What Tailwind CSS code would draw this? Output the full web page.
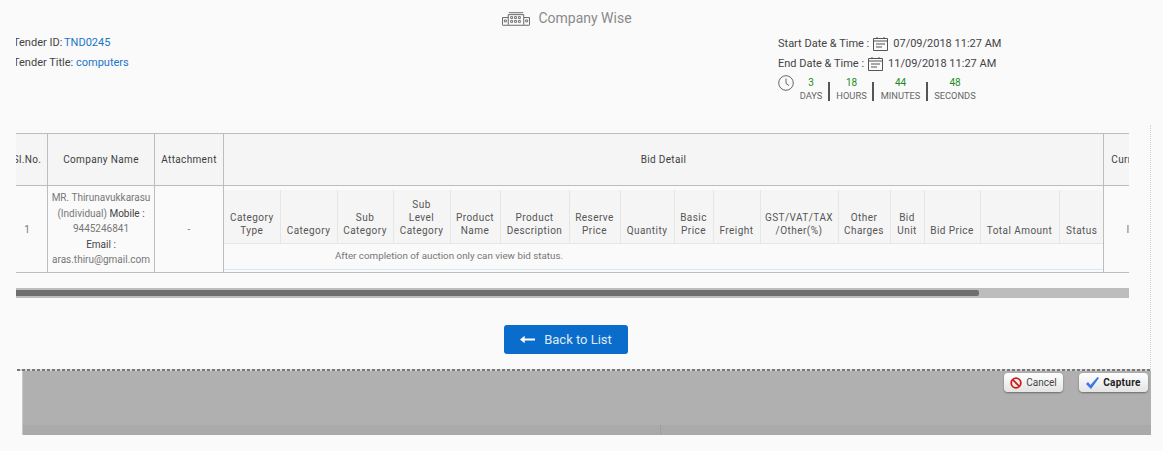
<!DOCTYPE html>
<html lang="en">
<head>
    <meta charset="UTF-8">
    <title>Company Wise</title>
    <script src="https://cdn.jsdelivr.net/npm/@tailwindcss/browser@4"></script>
</head>
<body class="bg-[#fafafa] font-['Roboto',sans-serif] h-[451px] w-[1163px] overflow-hidden relative">

<!-- page content, clipped on both sides like the original frame -->
<div class="ml-[16px] w-[1113px] overflow-hidden">
    <div class="flex justify-center items-center gap-[8px] pr-[11px] pt-[5px] h-[31px] text-[14px] text-[#8a8a8a]">
        <svg width="28" height="15" viewBox="0 0 29 15" fill="none" stroke="#666" stroke-width="1">
            <path d="M7 1.500h15M6.500 14V3.500h16V14M.5 14V6.500h6M28.500 14V6.500h-6M.5 14.500h28"/>
            <path d="M9 5.500h2v2H9zM13 5.500h2v2h-2zM17 5.500h2v2h-2zM9 9.500h2v2H9zM13 9.500h2v2h-2zM17 9.500h2v2h-2zM2.500 9h2v2h-2zM24.500 9h2v2h-2z" stroke-width="0.9"/>
        </svg>
        <span>Company Wise</span>
    </div>

    <div class="flex justify-between text-[11px] text-[#444] h-[94px]">
        <div class="-ml-[3px] pt-[2px] leading-[20px]">
            <div>Tender ID: <span class="text-[#1976c9] -ml-[1px]">TND0245</span></div>
            <div>Tender Title: <span class="text-[#1976c9]">computers</span></div>
        </div>
        <div class="w-[351px] pt-[3px] leading-[20px]">
            <div class="flex items-center gap-[4px]">
                <span>Start Date &amp; Time :</span>
                <svg width="15" height="14" viewBox="0 0 15 14" fill="none" stroke="#555"><path d="M.5 1.500h14v12H.5zM.5 4h14M4 0v2M11 0v2M3 7h9M3 10h6"/></svg>
                <span class="ml-[1px]">07/09/2018 11:27 AM</span>
            </div>
            <div class="flex items-center gap-[4px]">
                <span>End Date &amp; Time :</span>
                <svg width="15" height="14" viewBox="0 0 15 14" fill="none" stroke="#555"><path d="M.5 1.500h14v12H.5zM.5 4h14M4 0v2M11 0v2M3 7h9M3 10h6"/></svg>
                <span class="ml-[1px]">11/09/2018 11:27 AM</span>
            </div>
            <div class="flex items-start mt-[1px]">
                <svg class="mr-[5px]" width="16" height="16" viewBox="0 0 16 16" fill="none" stroke="#666"><circle cx="8" cy="8" r="7.300"/><path d="M8 3.500V8.500L11 10.500"/></svg>
                <div class="w-[24px] text-center leading-[13px] mt-[1px]"><div class="text-[10px] text-[#1c8c1c]">3</div><div class="text-[9.3px] text-[#666] whitespace-nowrap">DAYS</div></div>
                <div class="w-[2px] h-[19px] bg-[#555] ml-[5px] mr-[6px] mt-[7px]"></div>
                <div class="w-[31px] text-center leading-[13px] mt-[1px]"><div class="text-[10px] text-[#1c8c1c]">18</div><div class="text-[9.3px] text-[#666]">HOURS</div></div>
                <div class="w-[2px] h-[19px] bg-[#555] ml-[5px] mr-[6px] mt-[7px]"></div>
                <div class="w-[41px] text-center leading-[13px] mt-[1px]"><div class="text-[10px] text-[#1c8c1c]">44</div><div class="text-[9.3px] text-[#666]">MINUTES</div></div>
                <div class="w-[2px] h-[19px] bg-[#555] ml-[5px] mr-[6px] mt-[7px]"></div>
                <div class="w-[42px] text-center leading-[13px] mt-[1px]"><div class="text-[10px] text-[#1c8c1c]">48</div><div class="text-[9.3px] text-[#666]">SECONDS</div></div>
            </div>
        </div>
    </div>

    <div class="mt-[8px] overflow-hidden">
        <table class="-ml-[10px] w-[1155px] table-fixed border-collapse text-[10px] text-[#777]">
            <colgroup><col class="w-[41px]"><col class="w-[107px]"><col class="w-[69px]"><col class="w-[880px]"><col class="w-[58px]"></colgroup>
            <thead>
                <tr class="h-[52px] bg-[#f5f5f5] text-[#3d3d3d] tracking-[0.35px]">
                    <th class="border border-[#bdbdbd] font-normal">Sl.No.</th>
                    <th class="border border-[#bdbdbd] font-normal">Company Name</th>
                    <th class="border border-[#bdbdbd] font-normal">Attachment</th>
                    <th class="border border-[#bdbdbd] font-normal">Bid Detail</th>
                    <th class="border border-[#bdbdbd] font-normal whitespace-nowrap">Currency</th>
                </tr>
            </thead>
            <tbody>
                <tr class="h-[87px]">
                    <td class="border border-[#bdbdbd] text-center">1</td>
                    <td class="border border-[#bdbdbd] text-center leading-[15.4px] px-[3px] whitespace-nowrap">MR. Thirunavukkarasu<br>(Individual) <span class="text-[#444]">Mobile :</span><br>9445246841<br><span class="text-[#444]">Email :</span><br>aras.thiru@gmail.com</td>
                    <td class="border border-[#bdbdbd] text-center">-</td>
                    <td class="border border-[#bdbdbd] p-0 align-top pt-[4px]">
                        <table class="w-full table-fixed border-collapse">
                            <colgroup><col class="w-[56px]"><col class="w-[57px]"><col class="w-[56px]"><col class="w-[57px]"><col class="w-[50px]"><col class="w-[69px]"><col class="w-[51px]"><col class="w-[54px]"><col class="w-[39px]"><col class="w-[47px]"><col class="w-[78px]"><col class="w-[52px]"><col class="w-[34px]"><col class="w-[56px]"><col class="w-[79px]"><col class="w-[45px]"></colgroup>
                            <tr class="h-[53px] bg-[#f5f5f5] text-[#555] tracking-[0.45px] leading-[13px] text-center align-bottom [&>th]:font-normal [&>th]:pb-[6px] [&>th]:border-r [&>th]:border-[#e6e6e6] [&>th:last-child]:border-r-0">
                                <th>Category Type</th>
                                <th>Category</th>
                                <th>Sub Category</th>
                                <th>Sub<br>Level Category</th>
                                <th>Product Name</th>
                                <th>Product Description</th>
                                <th>Reserve Price</th>
                                <th>Quantity</th>
                                <th>Basic Price</th>
                                <th>Freight</th>
                                <th>GST/VAT/TAX<br>/Other(%)</th>
                                <th>Other Charges</th>
                                <th>Bid Unit</th>
                                <th>Bid Price</th>
                                <th>Total Amount</th>
                                <th>Status</th>
                            </tr>
                            <tr class="h-[26px] border-t border-[#e6e6e6] border-b border-b-[#d8e9f3]">
                                <td colspan="8" class="text-center text-[9.8px] pt-[1px]">After completion of auction only can view bid status.</td>
                                <td colspan="8"></td>
                            </tr>
                        </table>
                    </td>
                    <td class="border border-[#bdbdbd] text-center pl-[4px]">INR</td>
                </tr>
            </tbody>
        </table>
    </div>

    <!-- horizontal scrollbar -->
    <div class="mt-[15px] h-[10px] bg-[#bdbdbd] pt-[2px]">
        <div class="w-[963px] h-[6px] bg-[#6e6e6e] rounded-r-[2px]"></div>
    </div>

    <div class="mt-[27px] flex justify-center pr-[13px]">
        <button class="w-[124px] h-[29px] rounded-[3px] bg-[#0b6dcb] text-[#dfeaf6] text-[13px] flex items-center justify-center gap-[9px]">
            <svg width="15" height="9" viewBox="0 0 16 9" fill="#fff"><path d="M0 4.500L5 .5V3.500H16V5.500H5V8.500Z"/></svg>
            <span>Back to List</span>
        </button>
    </div>
</div>

<!-- capture selection overlay -->
<div class="absolute left-[1150px] top-[125px] h-[244px] border-l border-dotted border-[#d0d0d0]"></div>
<div class="mt-[15px] ml-[17px] w-[1134px] h-[2px] bg-[repeating-linear-gradient(90deg,#777_0_3px,#d8d8d8_3px_5px)]"></div>
<div class="ml-[22px] w-[1129px] h-[64px] bg-[#b0b0b0] border-l border-[#c8c8c8] flex flex-col">
    <div class="h-[54px] flex justify-end gap-[16px] pt-[2px] pr-[3px] text-[10px]">
        <div class="w-[59px] h-[19px] rounded-[4px] bg-linear-to-b from-white to-[#e4e4e4] shadow-[0_1px_2px_rgba(0,0,0,0.4)] flex items-center justify-center gap-[4px] text-[#444]">
            <svg width="12" height="12" viewBox="0 0 12 12" fill="none" stroke="#d01818" stroke-width="1.800"><circle cx="6" cy="6" r="4.800"/><path d="M2.700 2.700L9.300 9.300"/></svg>
            <span>Cancel</span>
        </div>
        <div class="w-[69px] h-[19px] rounded-[4px] bg-linear-to-b from-white to-[#e4e4e4] shadow-[0_1px_2px_rgba(0,0,0,0.4)] flex items-center justify-center gap-[4px] text-[#222] font-bold tracking-[0.3px]">
            <svg width="13" height="12" viewBox="0 0 13 12" fill="#3b78e7"><path d="M0 7L2 5L4.500 8L11.500 0L13 1L5 12Z"/></svg>
            <span>Capture</span>
        </div>
    </div>
    <div class="h-[10px] bg-[#aaaaaa] flex">
        <div class="w-[638px] border-r border-[#9e9e9e]"></div>
    </div>
</div>

</body>
</html>
